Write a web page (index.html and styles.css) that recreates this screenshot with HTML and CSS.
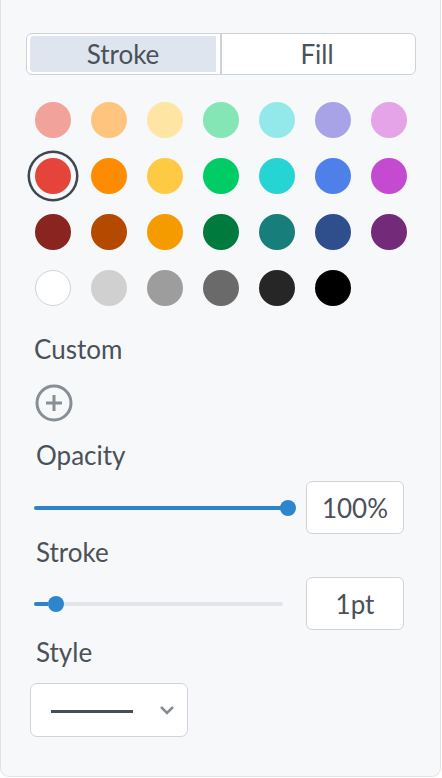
FILE: index.html
```html
<!DOCTYPE html>
<html>
<head>
<meta charset="utf-8">
<link rel="stylesheet" href="styles.css">
</head>
<body>
<div class="panel">
  <div class="seg">
    <div class="seg-btn active">Stroke</div>
    <span class="seg-div"></span>
    <div class="seg-btn">Fill</div>
  </div>

  <div class="swatches">
    <span class="sw" style="background:#f1a29b"></span>
    <span class="sw" style="background:#ffc57f"></span>
    <span class="sw" style="background:#ffe5a4"></span>
    <span class="sw" style="background:#84e6b4"></span>
    <span class="sw" style="background:#93e9e9"></span>
    <span class="sw" style="background:#a8a2e7"></span>
    <span class="sw" style="background:#e5a4e8"></span>

    <span class="sw selected" style="background:#e5443a"></span>
    <span class="sw" style="background:#ff8c00"></span>
    <span class="sw" style="background:#ffca43"></span>
    <span class="sw" style="background:#00cc66"></span>
    <span class="sw" style="background:#27d4d4"></span>
    <span class="sw" style="background:#4f80ea"></span>
    <span class="sw" style="background:#c44ad0"></span>

    <span class="sw" style="background:#8a2421"></span>
    <span class="sw" style="background:#b44a00"></span>
    <span class="sw" style="background:#f59b00"></span>
    <span class="sw" style="background:#017a3d"></span>
    <span class="sw" style="background:#177e7b"></span>
    <span class="sw" style="background:#2e4e8c"></span>
    <span class="sw" style="background:#732a78"></span>

    <span class="sw white"></span>
    <span class="sw" style="background:#d0d0d0"></span>
    <span class="sw" style="background:#9d9d9d"></span>
    <span class="sw" style="background:#6a6a6a"></span>
    <span class="sw" style="background:#262626"></span>
    <span class="sw" style="background:#000000"></span>
  </div>

  <div class="label custom">Custom</div>
  <div class="add">
    <svg width="38" height="38" viewBox="0 0 38 38">
      <circle cx="19" cy="19" r="17" fill="none" stroke="#888e95" stroke-width="3"/>
      <path d="M19 11v16M11 19h16" stroke="#888e95" stroke-width="3" fill="none"/>
    </svg>
  </div>

  <div class="label opacity-label">Opacity</div>
  <div class="row opacity-row">
    <div class="slider">
      <div class="track long"><div class="fill" style="width:100%"></div></div>
      <span class="thumb" style="left:246px"></span>
    </div>
    <div class="box">100%</div>
  </div>

  <div class="label stroke-label">Stroke</div>
  <div class="row stroke-row">
    <div class="slider">
      <div class="track short"><div class="fill" style="width:14px"></div></div>
      <span class="thumb" style="left:14px"></span>
    </div>
    <div class="box">1pt</div>
  </div>

  <div class="label style-label">Style</div>
  <div class="dropdown">
    <span class="dash"></span>
    <svg class="chev" width="16" height="10" viewBox="0 0 16 10">
      <path d="M2 2l6 6 6-6" fill="none" stroke="#868c93" stroke-width="2.5"/>
    </svg>
  </div>
</div>
</body>
</html>
```

FILE: styles.css
```css
* { box-sizing: border-box; }

html, body {
  margin: 0;
  padding: 0;
  background: #ffffff;
}

body {
  font-family: Lato, "Open Sans", sans-serif;
  color: #4a5159;
}

.panel {
  width: 441px;
  height: 777px;
  background: #f7f8fa;
  border: 1px solid #e0e3e7;
  border-top: none;
  border-radius: 0 0 9px 9px;
  padding-top: 33px;
  display: flex;
  flex-direction: column;
  align-items: flex-start;
}

.seg {
  margin-left: 25px;
  width: 390px;
  height: 42px;
  border: 1px solid #cdd2d9;
  border-radius: 6px;
  background: #ffffff;
  padding: 2px 3px;
  display: flex;
  align-items: stretch;
}

.seg-btn {
  font-size: 26px;
  line-height: 37px;
  text-align: center;
  flex: 1;
}

.seg-btn.active {
  flex: 0 0 186px;
  background: #dfe5ee;
  border-radius: 4px 0 0 4px;
}

.seg-div {
  width: 2px;
  margin-left: 4px;
  margin-top: -2px;
  margin-bottom: -2px;
  background: #cdd2d9;
}

.swatches {
  margin-top: 27px;
  margin-left: 34px;
  display: grid;
  grid-template-columns: repeat(7, 36px);
  grid-auto-rows: 36px;
  gap: 20px;
}

.sw {
  display: block;
  width: 36px;
  height: 36px;
  border-radius: 50%;
}

.sw.white {
  background: #ffffff;
  border: 1.5px solid #ced4dc;
}

.sw.selected {
  box-shadow: 0 0 0 5px #f7f8fa, 0 0 0 7.5px #3f4750;
}

.label {
  font-size: 26px;
  line-height: 31px;
  height: 31px;
  margin-left: 35px;
}

.custom {
  margin-top: 28px;
  margin-left: 33px;
}

.add {
  margin-top: 19px;
  margin-left: 34px;
  width: 38px;
  height: 38px;
}

.add svg { display: block; }

.opacity-label { margin-top: 18px; }

.row {
  margin-left: 33px;
  display: flex;
  align-items: center;
}

.opacity-row { margin-top: 10px; }

.stroke-label { margin-top: 3px; }

.stroke-row { margin-top: 9px; }

.style-label { margin-top: 7px; }

.slider {
  position: relative;
  width: 262px;
  height: 16px;
  margin-right: 10px;
  display: flex;
  align-items: center;
}

.track {
  height: 4px;
  border-radius: 2px;
  background: #e1e4e9;
  overflow: hidden;
}

.track.long { width: 254px; }
.track.short { width: 249px; }

.fill {
  height: 100%;
  background: #2f82c8;
}

.thumb {
  position: absolute;
  top: 0;
  width: 16px;
  height: 16px;
  border-radius: 50%;
  background: #2d85cc;
}

.box {
  width: 98px;
  height: 53px;
  border: 1.5px solid #d0d4da;
  border-radius: 6px;
  background: #ffffff;
  font-size: 26px;
  display: flex;
  align-items: center;
  justify-content: center;
}

.dropdown {
  margin-top: 15px;
  margin-left: 29px;
  width: 158px;
  height: 54px;
  border: 1.5px solid #d0d4da;
  border-radius: 7px;
  background: #ffffff;
  display: flex;
  align-items: center;
  padding-left: 20px;
}

.dash {
  width: 82px;
  height: 3px;
  margin-top: 3px;
  background: #474e56;
}

.chev {
  display: block;
  margin-left: 26px;
}
```
